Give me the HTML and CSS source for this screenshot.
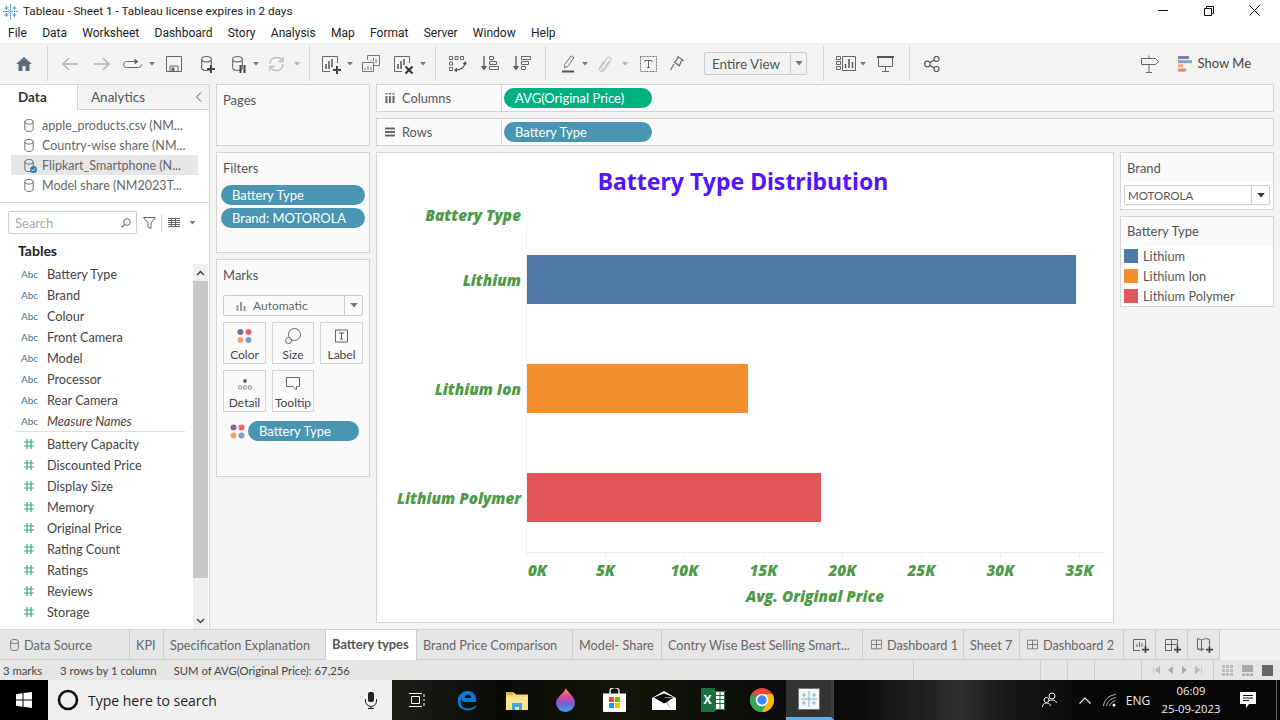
FILE: index.html
```html
<!DOCTYPE html>
<html lang="en">
<head>
<meta charset="utf-8">
<title>Tableau - Sheet 1</title>
<link rel="stylesheet" href="styles.css">
</head>
<body>
<svg class="defs" width="0" height="0" aria-hidden="true">
  <symbol id="caret" viewBox="0 0 6 4"><path d="M0 0h6L3 3.5z" fill="#777"/></symbol>
  <symbol id="cyl" viewBox="0 0 10 14"><path d="M.5 3v8c0 1.5 2 2.5 4.500 2.500s4.500-1 4.500-2.500V3M.5 3c0-1.500 2-2.500 4.500-2.500s4.500 1 4.500 2.500-2 2.500-4.500 2.500S.5 4.500.5 3z" fill="none" stroke="#666"/></symbol>
  <symbol id="hash" viewBox="0 0 10 10"><path d="M3 0v10M7 0v10M0 3h10M0 7h10" fill="none" stroke="#3fa483" stroke-width="1.200"/></symbol>
  <symbol id="dots" viewBox="0 0 15 15"><circle cx="3.500" cy="3.500" r="3" fill="#80679a"/><circle cx="11.500" cy="3.500" r="3" fill="#f0616e"/><circle cx="3.500" cy="11.500" r="3" fill="#f4a56c"/><circle cx="11.500" cy="11.500" r="3" fill="#7ba0cc"/></symbol>
  <symbol id="dash" viewBox="0 0 14 14"><path d="M.5 1.500h13v11H.5zM7 1.500v11M.5 7h13" fill="none" stroke="#666"/></symbol>
  <symbol id="plus" viewBox="0 0 8 8"><path d="M4 0v8M0 4h8" stroke="#444" stroke-width="2"/></symbol>
</svg>

<header class="titlebar">
  <svg class="logo" width="15" height="15" viewBox="0 0 15 15"><path d="M7.500 0v15M0 7.500h15M3.500 2v4M1.500 4h4M11.500 2v4M9.500 4h4M3.500 9v4M1.500 11h4M11.500 9v4M9.500 11h4" stroke="#2f7fb0" fill="none" stroke-dasharray="1.500 .7"/><path d="M5 5h5v5H5z" fill="#9cc4dc" opacity=".45"/></svg>
  <span class="window-title">Tableau - Sheet 1 - Tableau license expires in 2 days</span>
  <div class="winctl">
    <svg width="46" height="22" viewBox="0 0 46 22"><path d="M18 10.500h10" stroke="#111"/></svg>
    <svg width="46" height="22" viewBox="0 0 46 22"><path d="M18.500 8.500h7v7h-7zM20.500 8.500v-2h7v7h-2" stroke="#111" fill="none"/></svg>
    <svg width="46" height="22" viewBox="0 0 46 22"><path d="M17.500 5.500l10 10M27.500 5.500l-10 10" stroke="#111" fill="none"/></svg>
  </div>
</header>

<nav class="menubar">
  <span>File</span><span>Data</span><span>Worksheet</span><span>Dashboard</span><span>Story</span><span>Analysis</span><span>Map</span><span>Format</span><span>Server</span><span>Window</span><span>Help</span>
</nav>

<div class="toolbar">
  <span class="tb w32 first"><svg width="16" height="14" viewBox="0 0 16 14"><path d="M8 0L0 7h2.500v7h4V9h3v5h4V7H16z" fill="#5c6b7d"/></svg></span>
  <i class="sep"></i>
  <span class="tb w32"><svg width="16" height="14" viewBox="0 0 16 14"><path d="M16 7H1.500M7 1L1 7l6 6" fill="none" stroke="#b4b4b4" stroke-width="1.500"/></svg></span>
  <span class="tb w32"><svg width="16" height="14" viewBox="0 0 16 14"><path d="M0 7h14.500M9 1l6 6-6 6" fill="none" stroke="#b4b4b4" stroke-width="1.500"/></svg></span>
  <span class="tb w28"><svg width="19" height="12" viewBox="0 0 19 12"><path d="M12 3.500H3.500a3 3 0 0 0 0 6h12a3 3 0 0 0 3-3" fill="none" stroke="#666"/><path d="M11.500 .5l4 3-4 3z" fill="#666"/></svg></span>
  <span class="tb w12"><svg width="6" height="4"><use href="#caret"/></svg></span>
  <span class="tb w32"><svg width="16" height="16" viewBox="0 0 16 16"><path d="M.5.5h15v15H.5z" fill="none" stroke="#666"/><path d="M4 15v-5h8v5" fill="none" stroke="#666"/><path d="M5.500 11.500h3V15h-3z" fill="#666"/></svg></span>
  <span class="tb w32"><span class="stack"><svg width="11" height="15"><use href="#cyl"/></svg><svg class="badge" width="8" height="8"><use href="#plus"/></svg></span></span>
  <span class="tb w30"><span class="stack"><svg width="11" height="15"><use href="#cyl"/></svg><svg class="badge" width="7" height="8" viewBox="0 0 7 8"><path d="M1.500 0v8M5.500 0v8" stroke="#444" stroke-width="2"/></svg></span></span>
  <span class="tb w8"><svg width="6" height="4"><use href="#caret"/></svg></span>
  <span class="tb w32"><svg width="17" height="16" viewBox="0 0 17 16"><path d="M2 8a6.500 6.500 0 0 1 12-3.500M15 8a6.500 6.500 0 0 1-12 3.500" fill="none" stroke="#bbb" stroke-width="1.300"/><path d="M15 1v4.500h-4.500M2 15v-4.500h4.500" fill="none" stroke="#bbb" stroke-width="1.300"/></svg></span>
  <span class="tb w10"><svg width="6" height="4" class="pale"><use href="#caret"/></svg></span>
  <i class="sep"></i>
  <span class="tb w28"><span class="stack"><svg width="16" height="16" viewBox="0 0 16 16"><path d="M15.500 7V.5H.5v15H8" fill="none" stroke="#666"/><path d="M4 13V8M7 13V5M10 11V3" stroke="#555" stroke-width="1.500"/></svg><svg class="badge" width="8" height="8"><use href="#plus"/></svg></span></span>
  <span class="tb w12"><svg width="6" height="4"><use href="#caret"/></svg></span>
  <span class="tb w30"><svg width="18" height="17" viewBox="0 0 18 17"><path d="M5.500 5V.5h12v10H12" fill="none" stroke="#777"/><path d="M.5 7.500h11v9H.5z" fill="#f3f3f3" stroke="#777"/><path d="M9 6V5M11.500 6V3M14 8V4M3 15v-2M6 15v-4M9 15v-3" stroke="#777"/></svg></span>
  <span class="tb w32"><span class="stack"><svg width="16" height="16" viewBox="0 0 16 16"><path d="M15.500 7V.5H.5v15H8" fill="none" stroke="#666"/><path d="M4 13V8M7 13V5M10 9V3" stroke="#555" stroke-width="1.500"/></svg><svg class="badge" width="8" height="8" viewBox="0 0 8 8"><path d="M.5.5l7 7M7.500.5l-7 7" stroke="#333" stroke-width="2"/></svg></span></span>
  <span class="tb w10"><svg width="6" height="4"><use href="#caret"/></svg></span>
  <i class="sep"></i>
  <span class="tb w32"><svg width="18" height="16" viewBox="0 0 18 16"><path d="M.5.5h3v3h-3zM6 .5h3v3H6zM11.500.5h3v3h-3zM.5 6h3v3h-3zM.5 11.500h3v3h-3z" fill="none" stroke="#666"/><path d="M6 14c5 0 9-2 10.500-7" fill="none" stroke="#555" stroke-width="1.200"/><path d="M13.500 8l3-3 1.500 3.500zM8 11.500v5l-3-2.500z" fill="#555"/></svg></span>
  <span class="tb w32"><svg width="18" height="15" viewBox="0 0 18 15"><path d="M3 0v13" stroke="#555" stroke-width="1.300"/><path d="M0 10l3 4.500L6 10z" fill="#555"/><path d="M8.500 .5h4v3h-4zM8.500 5.500h7v3h-7zM8.500 10.500h9v3h-9z" fill="none" stroke="#666"/></svg></span>
  <span class="tb w32"><svg width="18" height="15" viewBox="0 0 18 15"><path d="M3 0v13" stroke="#555" stroke-width="1.300"/><path d="M0 10l3 4.500L6 10z" fill="#555"/><path d="M8.500 .5h9v3h-9zM8.500 5.500h7v3h-7zM8.500 10.500h4v3h-4z" fill="none" stroke="#666"/></svg></span>
  <i class="sep"></i>
  <span class="tb w24 ml4"><svg width="13" height="18" viewBox="0 0 13 18"><path d="M9 .8l3 2-6 8.500-3.500 1.500.3-3.500z" fill="none" stroke="#777"/><path d="M0 16.500h12" stroke="#555" stroke-width="2"/></svg></span>
  <span class="tb w10"><svg width="6" height="4"><use href="#caret"/></svg></span>
  <span class="tb w30"><svg width="13" height="16" viewBox="0 0 13 16"><path d="M10 5l-5 7.500c-1 1.500-3.500.5-2.800-1.500L8 2.500c1.500-2.500 5-.5 3.800 1.800L5.500 14c-2 2.800-6.500.5-4.800-2.500L5 5" fill="none" stroke="#c2c2c2" stroke-width="1.100"/></svg></span>
  <span class="tb w10"><svg width="6" height="4" class="pale"><use href="#caret"/></svg></span>
  <span class="tb w36"><svg width="17" height="16" viewBox="0 0 17 16"><path d="M.5.5h16v15H.5z" fill="none" stroke="#777" stroke-dasharray="2 1"/><path d="M5 4.500h7M8.500 4.500v7M7 11.500h3M5 6V4.500M12 6V4.500" fill="none" stroke="#666"/></svg></span>
  <span class="tb w22"><svg width="14" height="15" viewBox="0 0 14 15"><path d="M8 .8l5 3.500-2 1-1.500 4.500-5-3.500L7.500 3zM4 8l-3.500 6" fill="none" stroke="#666" stroke-width="1.100"/></svg></span>
  <div class="fit"><span class="fit-label">Entire View</span><span class="fit-arrow"><svg width="8" height="5"><use href="#caret"/></svg></span></div>
  <i class="sep"></i>
  <span class="tb w24 ml4"><svg width="20" height="15" viewBox="0 0 20 15"><path d="M.5.5h4v3h-4zM.5 5.500h4v3h-4zM.5 10.500h4v3h-4zM6.500 .5h13v14h-13z" fill="none" stroke="#666"/><path d="M9.500 12V8M13 12V3M16.500 12V6" stroke="#555" stroke-width="1.500"/></svg></span>
  <span class="tb w10"><svg width="6" height="4"><use href="#caret"/></svg></span>
  <span class="tb w34"><svg width="17" height="16" viewBox="0 0 17 16"><path d="M0 1h17" stroke="#555" stroke-width="2"/><path d="M1.500 2v8.500h14V2M8.500 10.500V15M5 15.500h7" fill="none" stroke="#666"/></svg></span>
  <i class="sep"></i>
  <span class="tb w32"><svg width="16" height="16" viewBox="0 0 16 16"><circle cx="3.500" cy="8" r="2.800" fill="none" stroke="#555" stroke-width="1.200"/><circle cx="12.500" cy="3" r="2.500" fill="none" stroke="#555" stroke-width="1.200"/><circle cx="12.500" cy="13" r="2.500" fill="none" stroke="#555" stroke-width="1.200"/><path d="M6 6.500l4.300-2.500M6 9.500l4.300 2.500" stroke="#555" stroke-width="1.200"/></svg></span>
  <div class="tb-right">
    <span class="tb w32"><svg width="18" height="18" viewBox="0 0 18 18"><path d="M.5 3.500h14l3 3-3 3H.5zM8 .5v3M8 9.500V17M5 17.500h6" fill="none" stroke="#666"/></svg></span>
    <div class="showme">
      <svg width="14" height="16" viewBox="0 0 14 16"><rect width="11" height="3" fill="#8d7ba3"/><rect y="4.200" width="14" height="3" fill="#7fa5cd"/><rect y="8.400" width="5" height="3" fill="#f4a971"/><rect y="12.600" width="8" height="3" fill="#f87a85"/></svg>
      <span>Show Me</span>
    </div>
  </div>
</div>

<main class="main">
  <aside class="datapane">
    <div class="panetabs">
      <span class="ptab ptab-on">Data</span>
      <span class="ptab ptab-off">Analytics<svg width="7" height="10" viewBox="0 0 7 10"><path d="M6 .5L1.500 5 6 9.500" fill="none" stroke="#555"/></svg></span>
    </div>
    <ul class="sources">
      <li><svg width="10" height="13"><use href="#cyl"/></svg>apple_products.csv (NM...</li>
      <li><svg width="10" height="13"><use href="#cyl"/></svg>Country-wise share (NM...</li>
      <li class="active"><span class="stack"><svg width="10" height="13"><use href="#cyl"/></svg><svg class="check" width="7" height="7" viewBox="0 0 7 7"><circle cx="3.500" cy="3.500" r="3.500" fill="#2b7fa8"/><path d="M1.800 3.500l1.300 1.300 2.100-2.300" stroke="#fff" fill="none"/></svg></span>Flipkart_Smartphone (N...</li>
      <li><svg width="10" height="13"><use href="#cyl"/></svg>Model share (NM2023T...</li>
    </ul>
    <div class="searchrow">
      <div class="search"><span>Search</span><svg width="10" height="10" viewBox="0 0 10 10"><circle cx="6" cy="4" r="3.300" fill="none" stroke="#666"/><path d="M3.500 6.500L.5 9.500" stroke="#666" stroke-width="1.200"/></svg></div>
      <svg width="13" height="12" viewBox="0 0 13 12"><path d="M.5.500h12L8 6v5.500L5 10V6z" fill="none" stroke="#666"/></svg>
      <i class="vsep"></i>
      <svg width="12" height="9" viewBox="0 0 12 9"><path d="M0 .5h12M0 2.500h12M0 4.500h12M0 6.500h12M0 8.500h12M3.500 0v9M7.500 0v9" stroke="#666" fill="none"/></svg>
      <svg class="listcaret" width="7" height="4"><use href="#caret"/></svg>
    </div>
    <h2 class="tables">Tables</h2>
    <div class="fieldsarea">
      <ul class="fields">
        <li><abbr>Abc</abbr>Battery Type</li>
        <li><abbr>Abc</abbr>Brand</li>
        <li><abbr>Abc</abbr>Colour</li>
        <li><abbr>Abc</abbr>Front Camera</li>
        <li><abbr>Abc</abbr>Model</li>
        <li><abbr>Abc</abbr>Processor</li>
        <li><abbr>Abc</abbr>Rear Camera</li>
        <li class="gen"><abbr>Abc</abbr>Measure Names</li>
        <li class="rule"></li>
        <li><b class="hs"><svg width="10" height="10"><use href="#hash"/></svg></b>Battery Capacity</li>
        <li><b class="hs"><svg width="10" height="10"><use href="#hash"/></svg></b>Discounted Price</li>
        <li><b class="hs"><svg width="10" height="10"><use href="#hash"/></svg></b>Display Size</li>
        <li><b class="hs"><svg width="10" height="10"><use href="#hash"/></svg></b>Memory</li>
        <li><b class="hs"><svg width="10" height="10"><use href="#hash"/></svg></b>Original Price</li>
        <li><b class="hs"><svg width="10" height="10"><use href="#hash"/></svg></b>Rating Count</li>
        <li><b class="hs"><svg width="10" height="10"><use href="#hash"/></svg></b>Ratings</li>
        <li><b class="hs"><svg width="10" height="10"><use href="#hash"/></svg></b>Reviews</li>
        <li><b class="hs"><svg width="10" height="10"><use href="#hash"/></svg></b>Storage</li>
      </ul>
      <div class="scrollbar">
        <span class="sb-btn"><svg width="9" height="6" viewBox="0 0 9 6"><path d="M1 5l3.500-3.500L8 5" fill="none" stroke="#444" stroke-width="1.500"/></svg></span>
        <span class="sb-thumb"></span>
        <span class="sb-btn sb-end"><svg width="9" height="6" viewBox="0 0 9 6"><path d="M1 1l3.500 3.500L8 1" fill="none" stroke="#444" stroke-width="1.500"/></svg></span>
      </div>
    </div>
  </aside>

  <section class="cards">
    <div class="card pages"><h3>Pages</h3></div>
    <div class="card filters">
      <h3>Filters</h3>
      <div class="pill blue">Battery Type</div>
      <div class="pill blue brandpill">Brand: MOTOROLA</div>
    </div>
    <div class="card marks">
      <h3>Marks</h3>
      <div class="marktype">
        <svg width="10" height="10" viewBox="0 0 10 10"><path d="M1.500 10V4M5 10V1M8.500 10V5" stroke="#999" stroke-width="2"/></svg>
        <span>Automatic</span>
        <i><svg width="8" height="5"><use href="#caret"/></svg></i>
      </div>
      <div class="markbtns">
        <div class="mbtn"><svg width="15" height="15"><use href="#dots"/></svg><span>Color</span></div>
        <div class="mbtn"><svg width="16" height="16" viewBox="0 0 16 16"><circle cx="9.500" cy="6.500" r="6" fill="none" stroke="#666"/><circle cx="3.500" cy="12.500" r="3" fill="#fafafa" stroke="#666"/></svg><span>Size</span></div>
        <div class="mbtn"><svg width="13" height="13" viewBox="0 0 13 13"><path d="M.5.500h12v12H.5z" fill="none" stroke="#666"/><path d="M4 3.500h5M6.500 3.500v6M5 9.500h3" fill="none" stroke="#555"/></svg><span>Label</span></div>
        <div class="mbtn"><svg width="14" height="12" viewBox="0 0 14 12"><circle cx="7" cy="3" r="2" fill="#666"/><circle cx="2" cy="9.500" r="1.700" fill="none" stroke="#666" stroke-width=".8"/><circle cx="7" cy="9.500" r="1.700" fill="none" stroke="#666" stroke-width=".8"/><circle cx="12" cy="9.500" r="1.700" fill="none" stroke="#666" stroke-width=".8"/></svg><span>Detail</span></div>
        <div class="mbtn"><svg width="14" height="14" viewBox="0 0 14 14"><path d="M.5.500h13v9h-3v3.500L7 9.500H.5z" fill="none" stroke="#666"/></svg><span>Tooltip</span></div>
      </div>
      <div class="markfield">
        <svg width="15" height="15"><use href="#dots"/></svg>
        <div class="pill blue">Battery Type</div>
      </div>
    </div>
  </section>

  <section class="workspace">
    <div class="shelf">
      <div class="shelf-label"><svg width="10" height="10" viewBox="0 0 10 10"><path d="M1.500 3v7M5 3v7M8.500 3v7M1.500 0v1.500M5 0v1.500M8.500 0v1.500" stroke="#666" stroke-width="2"/></svg>Columns</div>
      <div class="shelf-body"><div class="pill green">AVG(Original Price)</div></div>
    </div>
    <div class="shelf">
      <div class="shelf-label"><svg width="10" height="10" viewBox="0 0 10 10"><path d="M0 1.500h10M0 5h10M0 8.500h10" stroke="#666" stroke-width="2"/></svg>Rows</div>
      <div class="shelf-body"><div class="pill blue">Battery Type</div></div>
    </div>
    <div class="viewarea">
      <div class="chart">
        <h1 class="chart-title">Battery Type Distribution</h1>
        <div class="col-head">Battery Type</div>
        <div class="plot">
          <div class="row"><span class="row-label">Lithium</span><div class="track"><div class="bar c1" style="width:549px"></div></div></div>
          <div class="row"><span class="row-label">Lithium Ion</span><div class="track"><div class="bar c2" style="width:221px"></div></div></div>
          <div class="row"><span class="row-label">Lithium Polymer</span><div class="track"><div class="bar c3" style="width:294px"></div></div></div>
        </div>
        <div class="ticks"><i></i><i></i><i></i><i></i><i></i><i></i><i></i></div>
        <div class="tick-labels"><span class="zero">0K</span><span>5K</span><span>10K</span><span>15K</span><span>20K</span><span>25K</span><span>30K</span><span>35K</span></div>
        <div class="axis-title">Avg. Original Price</div>
      </div>
      <aside class="legends">
        <div class="legend brand">
          <h3>Brand</h3>
          <div class="legend-body"><div class="select"><span>MOTOROLA</span><i><svg width="8" height="5" viewBox="0 0 6 4"><path d="M0 0h6L3 3.500z" fill="#333"/></svg></i></div></div>
        </div>
        <div class="legend">
          <h3>Battery Type</h3>
          <ul class="legend-body keys">
            <li><i class="c1"></i>Lithium</li>
            <li><i class="c2"></i>Lithium Ion</li>
            <li><i class="c3"></i>Lithium Polymer</li>
          </ul>
        </div>
      </aside>
    </div>
  </section>
</main>

<div class="tabs">
  <span class="tab t-ds"><svg width="9" height="12"><use href="#cyl"/></svg>Data Source</span>
  <span class="tab t-kpi">KPI</span>
  <span class="tab t-spec">Specification Explanation</span>
  <span class="tab t-bat">Battery types</span>
  <span class="tab t-brand">Brand Price Comparison</span>
  <span class="tab t-model">Model- Share</span>
  <span class="tab t-contry">Contry Wise Best Selling Smart...</span>
  <span class="tab t-d1"><svg width="11" height="11"><use href="#dash"/></svg>Dashboard 1</span>
  <span class="tab t-s7">Sheet 7</span>
  <span class="tab t-d2"><svg width="11" height="11"><use href="#dash"/></svg>Dashboard 2</span>
  <span class="tab t-add"><span class="stack"><svg width="13" height="12" viewBox="0 0 13 12"><path d="M.5.500h12v7M7 11.500H.5V.5" fill="none" stroke="#666"/><path d="M4 8V5M6.500 8V3M9 8V4" stroke="#666"/></svg><svg class="badge" width="7" height="7"><use href="#plus"/></svg></span></span>
  <span class="tab t-add"><span class="stack"><svg width="13" height="12" viewBox="0 0 13 12"><path d="M7 11.500H.5V.5h12V7M.5 5.500h12M6.500 .5v11" fill="none" stroke="#666"/></svg><svg class="badge" width="7" height="7"><use href="#plus"/></svg></span></span>
  <span class="tab t-add"><span class="stack"><svg width="13" height="13" viewBox="0 0 13 13"><path d="M.5.500l4 1.500 4-1.500 4 1v6M7 11l-2.500 1.500-4-1.500zM4.500 2v10.500M.5 .5v10.500" fill="none" stroke="#666"/></svg><svg class="badge" width="7" height="7"><use href="#plus"/></svg></span></span>
  <span class="tab-rest"></span>
</div>

<footer class="status">
  <div class="st-text"><span>3 marks</span><span>3 rows by 1 column</span><span>SUM of AVG(Original Price): 67,256</span></div>
  <i class="st-cell s127"></i><i class="st-cell s27"></i><i class="st-cell s27"></i><i class="st-cell s47"></i>
  <div class="st-cell s72 nav">
    <svg width="7" height="8" viewBox="0 0 7 8"><path d="M.5 0v8M7 0L2 4l5 4z" fill="#bbb" stroke="#bbb" stroke-width=".6"/></svg>
    <svg width="7" height="8" viewBox="0 0 7 8"><path d="M6 0L1 4l5 4z" fill="#aaa"/></svg>
    <svg width="7" height="8" viewBox="0 0 7 8"><path d="M1 0l5 4-5 4z" fill="#aaa"/></svg>
    <svg width="7" height="8" viewBox="0 0 7 8"><path d="M6.500 0v8M0 0l5 4-5 4z" fill="#bbb" stroke="#bbb" stroke-width=".6"/></svg>
  </div>
  <div class="st-cell views">
    <svg width="11" height="11" viewBox="0 0 11 11"><path d="M0 0h3v3H0zM4 0h3v3H4zM8 0h3v3H8zM0 4h3v3H0zM4 4h3v3H4zM8 4h3v3H8zM0 8h3v3H0zM4 8h3v3H4zM8 8h3v3H8z" fill="#bbb"/></svg>
    <svg width="11" height="11" viewBox="0 0 11 11"><path d="M0 0h11v7H0zM0 8.500h3V11H0zM4 8.500h3V11H4zM8 8.500h3V11H8z" fill="#aaa"/></svg>
    <svg width="11" height="11" viewBox="0 0 11 11"><path d="M0 0h11v11H0z" fill="#666"/></svg>
  </div>
</footer>

<footer class="taskbar">
  <div class="start"><svg width="16" height="16" viewBox="0 0 16 16"><path d="M0 2.300l6.500-1v6.200H0zM7.500 1.100L16 0v7.500H7.500zM0 8.500h6.500v6.200l-6.500-1zM7.500 8.500H16V16l-8.500-1.200z" fill="#fff"/></svg></div>
  <div class="tsearch">
    <svg width="22" height="22" viewBox="0 0 22 22"><circle cx="11" cy="11" r="9" fill="none" stroke="#111" stroke-width="2.600"/></svg>
    <span>Type here to search</span>
    <svg class="mic" width="12" height="17" viewBox="0 0 12 17"><rect x="3" y="0" width="6" height="10" rx="2" fill="#222"/><path d="M.5 7v2a5.500 5.500 0 0 0 11 0V7M6 14.500V17M3 16.500h6" fill="none" stroke="#222"/></svg>
  </div>
  <span class="tk tk-view"><svg width="17" height="14" viewBox="0 0 17 14"><path d="M3.500 3.500h8v7h-8zM1 .5h13M1 13.500h13M16 1v3M16 6v2M16 10v3" fill="none" stroke="#fff"/></svg></span>
  <span class="tk"><svg width="21" height="21" viewBox="0 0 21 21"><path d="M19 15c-2.500 3.500-10 5-13.500 1.500C3 14 3 10.500 5 8c-1 3 1 4 4 4h10V9.500C19 4 15 1 10.500 1 5 1 1 5.500.8 10.500 0 16.500 5 20.500 10.500 20.500c3.500 0 6.500-1.500 8.500-3.500zM7.500 8c.5-2 2-3.500 3.500-3.500s3 1.500 3.200 3.500z" fill="#0b78d4"/></svg></span>
  <span class="tk"><svg width="22" height="19" viewBox="0 0 22 19"><path d="M0 1.500h8l2 2h12V19H0z" fill="#f7d774"/><path d="M0 1h7v3H0z" fill="#e0b23c"/><path d="M0 6h22v13H0z" fill="#fce394"/><path d="M6 19v-7h10v7h-3v-3H9v3z" fill="#3fa8dc"/></svg></span>
  <span class="tk"><svg width="19" height="24" viewBox="0 0 19 24"><defs><linearGradient id="drop" x1="0" y1="0" x2="0" y2="1"><stop offset="0" stop-color="#f4a23c"/><stop offset=".35" stop-color="#e2489a"/><stop offset=".65" stop-color="#7a5bd6"/><stop offset="1" stop-color="#2fb0e8"/></linearGradient></defs><path d="M10 0c1 4 9 8 9 15a9.500 9 0 0 1-19 0C0 9 8 6 10 0z" fill="url(#drop)"/></svg></span>
  <span class="tk"><svg width="23" height="24" viewBox="0 0 23 24"><path d="M7 6V3a4 3 0 0 1 9 0v3" fill="none" stroke="#fff" stroke-width="1.300"/><path d="M0 5.500h23V23a1 1 0 0 1-1 1H1a1 1 0 0 1-1-1z" fill="#fff"/><path d="M6 9h5v5H6z" fill="#f25022"/><path d="M12 9h5v5h-5z" fill="#7fba00"/><path d="M6 15h5v5H6z" fill="#00a4ef"/><path d="M12 15h5v5h-5z" fill="#ffb900"/></svg></span>
  <span class="tk"><svg width="24" height="19" viewBox="0 0 24 19"><path d="M12 0l12 7v12H0V7z" fill="#fff"/><path d="M2 6.500l10 6 5.500-3L12 6h9L12 2.500 3 6z" fill="#000"/><path d="M12 6.500h10L14 11l5 7z" fill="#111"/></svg></span>
  <span class="tk"><span class="excel"><span class="excel-x">X</span><svg width="10" height="19" viewBox="0 0 10 19"><path d="M.5.500h9v18h-9zM.5 4.500h9M.5 8.500h9M.5 12.500h9M5 .5v18" fill="none" stroke="#1d6f42"/></svg></span></span>
  <span class="tk"><svg width="24" height="24" viewBox="0 0 24 24"><circle cx="12" cy="12" r="12" fill="#ea4335"/><path d="M12 12L1.600 6A12 12 0 0 0 12 24l5.200-9z" fill="#34a853"/><path d="M12 6h10.400A12 12 0 0 1 12 24l5.200-9z" fill="#fbbc05"/><circle cx="12" cy="12" r="5.500" fill="#4285f4" stroke="#fff" stroke-width="1.600"/></svg></span>
  <span class="tk tk-on"><svg width="22" height="22" viewBox="0 0 22 22"><rect width="22" height="22" fill="#f4f6f8" stroke="#777" stroke-width="2"/><path d="M11 3v16M3 11h16M6 5v4M4 7h4M16 5v4M14 7h4M6 13v4M4 15h4M16 13v4M14 15h4" stroke="#7fb2d2" fill="none"/></svg></span>
  <div class="tray">
    <span class="tr w36t"><svg width="15" height="16" viewBox="0 0 15 16"><circle cx="10" cy="4" r="3" fill="none" stroke="#eee"/><circle cx="4.500" cy="8" r="2.500" fill="none" stroke="#eee"/><path d="M.5 15c0-2.500 1.500-4 4-4s4 1.500 4 3M7 9c1-1 2-1 3-1 2.500 0 4 1 4.500 3" fill="none" stroke="#eee"/></svg></span>
    <span class="tr w36t"><svg width="12" height="7" viewBox="0 0 12 7"><path d="M.5 6.500L6 1l5.500 5.500" fill="none" stroke="#eee" stroke-width="1.200"/></svg></span>
    <span class="tr w14t"><svg width="14" height="13" viewBox="0 0 14 13"><path d="M.5 12C1 6 6 1 13 .5M3.500 12C4 8 8 4 13 3.500M6.500 12c.5-2 2.500-4.500 6-5.500" fill="none" stroke="#bbb"/><circle cx="11" cy="11" r="1.500" fill="#fff"/></svg></span>
    <span class="tr eng">ENG</span>
    <span class="tr clock"><span>06:09</span><span>25-09-2023</span></span>
    <span class="tr w50t"><svg width="16" height="16" viewBox="0 0 16 16"><path d="M0 0h16v12H9l-3 4v-4H0z" fill="#fff"/><path d="M3 3.500h10M3 6h10M3 8.500h6" stroke="#111"/></svg></span>
    <i class="desk"></i>
  </div>
</footer>
</body>
</html>
```
FILE: styles.css
```css
* { box-sizing: border-box; }
html, body { margin: 0; padding: 0; height: 100%; }
body {
  width: 1280px;
  height: 720px;
  overflow: hidden;
  display: flex;
  flex-direction: column;
  font-family: "Lato", "Liberation Sans", sans-serif;
  font-size: 13px;
  color: #555;
  background: #f3f3f3;
}
h1, h2, h3, ul { margin: 0; padding: 0; font-weight: normal; list-style: none; }
abbr { text-decoration: none; }
i, b { font-style: normal; font-weight: normal; }
svg { display: block; flex: none; }
.defs { position: absolute; }
.stack { position: relative; display: block; }
.badge { position: absolute; right: -3px; bottom: -2px; }

.titlebar {
  height: 22px; flex: none; background: #fff;
  display: flex; align-items: center; padding-left: 3px;
}
.window-title { margin-left: 5px; font: 11.750px "Roboto", sans-serif; color: #222; }
.winctl { margin-left: auto; display: flex; margin-right: 2px; }

.menubar {
  height: 21px; flex: none; background: #fff;
  display: flex; align-items: center; gap: 15.300px; padding-left: 8px;
  font: 12px "Roboto", sans-serif; color: #222;
}

.toolbar { height: 41px; flex: none; display: flex; align-items: center; background: #f3f3f3; }
.tb { display: flex; align-items: center; justify-content: center; height: 100%; flex: none; }
.first { margin-left: 8px; }
.ml4 { margin-left: 4px; }
.w8 { width: 8px; } .w10 { width: 10px; } .w12 { width: 12px; } .w22 { width: 22px; }
.w24 { width: 24px; } .w28 { width: 28px; } .w30 { width: 30px; } .w32 { width: 32px; }
.w34 { width: 34px; } .w36 { width: 36px; }
.pale { opacity: .5; }
.sep { width: 1px; height: 35px; background: #d4d4d4; margin: 0 6px 0 7px; flex: none; }
.fit {
  width: 103px; height: 23px; margin: 0 9px 0 16px; display: flex; flex: none;
  border: 1px solid #ccc; border-radius: 2px; color: #555; font-size: 13.500px; align-items: center;
}
.fit-label { width: 85px; padding-left: 7px; }
.fit-arrow { flex: 1; height: 100%; border-left: 1px solid #ccc; display: flex; align-items: center; justify-content: center; }
.tb-right { margin-left: auto; display: flex; align-items: center; height: 100%; padding-right: 29px; }
.showme { margin-left: 12px; display: flex; align-items: center; gap: 6px; font-size: 13px; color: #444; }
.showme span { padding-bottom: 1px; }

.main { height: 545px; flex: none; display: flex; background: #f3f3f3; }

.datapane { width: 210px; flex: none; background: #fff; border-right: 1px solid #d4d4d4; display: flex; flex-direction: column; }
.panetabs { display: flex; height: 26px; flex: none; font-size: 13.500px; background: #f3f3f3; }
.ptab { display: flex; align-items: center; padding-bottom: 1px; }
.ptab-on { width: 77px; padding-left: 18px; font-weight: 700; color: #333; background: #fff; border-top: 1px solid #d4d4d4; }
.ptab-off { flex: 1; padding-left: 13px; color: #555; border: 1px solid #d4d4d4; border-right: 0; justify-content: space-between; padding-right: 7px; }
.sources { height: 93px; flex: none; padding: 5px 11px 0; border-bottom: 1px solid #d9d9d9; }
.sources li { height: 20px; padding-left: 13px; display: flex; align-items: center; gap: 8px; font-size: 12.500px; color: #666; white-space: nowrap; }
.sources .active { background: #e6e6e6; }
.check { position: absolute; right: -3px; bottom: -1px; }
.searchrow { height: 23px; margin-top: 8px; flex: none; display: flex; align-items: center; padding-left: 8px; }
.search {
  width: 129px; height: 23px; border: 1px solid #ccc; border-radius: 2px; display: flex;
  align-items: center; justify-content: space-between; padding: 0 5px 0 6px; color: #aaa; font-size: 13px;
}
.search span { padding-top: 1px; }
.searchrow > svg:nth-of-type(1) { margin-left: 6px; }
.vsep { width: 1px; height: 18px; background: #d4d4d4; margin: 0 6px 0 5px; flex: none; }
.listcaret { margin-left: 9px; }
.tables { height: 29px; flex: none; padding: 8px 0 0 18px; font-size: 14px; font-weight: 700; color: #222; }
.fieldsarea { flex: 1; min-height: 0; display: flex; }
.fields { width: 183px; flex: none; }
.fields li { height: 21px; display: flex; align-items: center; font-size: 12.700px; color: #444; white-space: nowrap; }
.fields abbr { width: 47px; padding-left: 21px; font-size: 10px; color: #3f7596; flex: none; }
.fields .hs { width: 47px; padding-left: 24px; flex: none; }
.fields .gen { font-style: italic; }
.fields .gen abbr { font-style: normal; }
.fields .rule { height: 1px; margin: 0 -2px 1px 15px; background: #ddd; }
.scrollbar { width: 15px; margin-left: 10px; margin-top: 1px; background: #f0f0f0; display: flex; flex-direction: column; align-items: center; flex: none; }
.sb-btn { height: 17px; display: flex; align-items: center; justify-content: center; flex: none; }
.sb-thumb { width: 100%; height: 297px; background: #c8c8c8; flex: none; }
.sb-end { margin-top: auto; }

.cards { width: 154px; flex: none; margin-left: 6px; display: flex; flex-direction: column; gap: 6px; }
.card { background: #fafafa; border: 1px solid #d4d4d4; padding: 0 5px; flex: none; }
.card h3 { font-size: 13px; color: #555; padding: 8px 0 0 1px; height: 25px; line-height: 15px; }
.pages { height: 62px; }
.filters { height: 101px; padding: 0 4px; }
.filters h3 { padding-left: 2px; height: 32px; }
.filters .pill { width: 100%; }
.filters .pill + .pill { margin-top: 3px; }
.brandpill { font-size: 12.600px; }
.marks { height: 218px; padding: 0 6px; }
.marks h3 { padding-left: 0; height: 35px; }
.pill {
  height: 20px; border-radius: 10px; color: #fff; font-size: 13px; line-height: 20px;
  padding-left: 11px; white-space: nowrap; flex: none;
}
.blue { background: #4996b2; }
.green { background: #00b180; }
.marktype {
  height: 21px; display: flex; align-items: center; border: 1px solid #ccc; border-radius: 2px;
  padding-left: 12px; gap: 7px; font-size: 12px; color: #666;
}
.marktype i { margin-left: auto; width: 18px; height: 100%; border-left: 1px solid #ccc; display: flex; align-items: center; justify-content: center; }
.markbtns { display: grid; grid-template-columns: 43px 42px 43px; column-gap: 6px; row-gap: 6px; margin-top: 6px; }
.mbtn {
  height: 42px; border: 1px solid #d4d4d4; display: flex; flex-direction: column; align-items: center;
  padding-top: 5px; font-size: 12px; color: #444; background: #fafafa;
}
.mbtn svg { height: 16px; }
.mbtn span { margin-top: auto; padding-bottom: 1px; }
.markfield { display: flex; align-items: center; gap: 3px; margin: 9px 0 0 7px; }
.markfield .pill { width: 111px; }

.workspace { width: 898px; flex: none; margin-left: 6px; display: flex; flex-direction: column; }
.shelf { height: 28px; flex: none; display: flex; background: #fafafa; border: 1px solid #d4d4d4; margin-bottom: 6px; }
.shelf-label { width: 125px; border-right: 1px solid #d4d4d4; display: flex; align-items: center; gap: 7px; padding: 0 0 1px 8px; color: #555; font-size: 12.800px; }
.shelf-body { flex: 1; display: flex; align-items: center; padding-left: 2px; }
.shelf .pill { width: 148px; }

.viewarea { display: flex; gap: 6px; align-items: flex-start; }
.chart { width: 738px; height: 471px; flex: none; background: #fff; border: 1px solid #d4d4d4; display: flex; flex-direction: column; font-family: "Open Sans", sans-serif; }
.chart-title { height: 52px; text-align: center; font-size: 23px; line-height: 56px; font-weight: 700; color: #5514ff; font-family: "Noto Sans", sans-serif; padding-right: 4px; flex: none; }
.col-head, .row-label, .tick-labels, .axis-title { color: #4f9b49; font-weight: 800; font-style: italic; font-size: 15.300px; }
.col-head { height: 21px; line-height: 21px; margin-bottom: -1px; width: 144px; text-align: right; flex: none; }
.plot { height: 327px; flex: none; display: flex; flex-direction: column; }
.row { height: 109px; display: flex; align-items: center; flex: none; }
.row-label { width: 144px; text-align: right; white-space: nowrap; flex: none; }
.track { width: 584px; height: 100%; margin-left: 5px; border-left: 1px solid #f0f0f0; display: flex; align-items: center; }
.bar { height: 49px; }
.c1 { background: #4e79a7; }
.c2 { background: #f28e2b; }
.c3 { background: #e15759; }
.ticks { margin-left: 149px; width: 579px; height: 5px; flex: none; display: flex; border-top: 1px solid #eee; border-left: 1px solid #eee; padding-left: 78px; }
.ticks i { width: 79px; height: 4px; border-left: 1px solid #eee; flex: none; }
.tick-labels { display: flex; margin-left: 110px; height: 27px; line-height: 27px; flex: none; }
.tick-labels span { width: 79px; text-align: center; flex: none; }
.tick-labels .zero { padding-left: 22px; }
.axis-title { margin-left: 149px; width: 578px; text-align: center; height: 24px; line-height: 24px; flex: none; }

.legends { width: 154px; flex: none; display: flex; flex-direction: column; gap: 6px; }
.legend { border: 1px solid #d4d4d4; background: #fafafa; flex: none; }
.legend h3 { height: 29px; line-height: 29px; padding-left: 6px; font-size: 13px; color: #555; }
.brand h3 { line-height: 31px; }
.legend-body { background: #fff; }
.brand { height: 58px; }
.brand .legend-body { height: 27px; padding: 3px 3px 0; }
.select { height: 20px; border: 1px solid #ccc; border-radius: 2px; display: flex; align-items: center; padding-left: 3px; font-size: 11.500px; color: #555; }
.select i { margin-left: auto; width: 18px; height: 100%; border-left: 1px solid #ccc; display: flex; align-items: center; justify-content: center; }
.keys { height: 60px; padding: 0 0 0 3px; }
.keys li { height: 20px; display: flex; align-items: center; gap: 5px; font-size: 12.800px; color: #555; }
.keys i { width: 14px; height: 14px; flex: none; }

.tabs { height: 31px; flex: none; display: flex; border-top: 1px solid #d4d4d4; background: #f0f0f0; }
.tab {
  display: flex; align-items: center; gap: 5px; padding-left: 6px; height: 100%; flex: none;
  background: #e6e6e6; border-right: 1px solid #ccc; border-bottom: 1px solid #ccc;
  font-size: 12.700px; color: #666; white-space: nowrap; overflow: hidden;
}
.t-ds { width: 130px; padding-left: 10px; }
.t-kpi { width: 34px; padding-left: 6px; }
.t-spec { width: 162px; }
.t-bat { width: 91px; background: #fff; font-weight: 700; font-size: 12.900px; color: #555; border-bottom: 0; padding-bottom: 3px; }
.t-brand { width: 156px; }
.t-model { width: 89px; }
.t-contry { width: 201px; }
.t-d1 { width: 101px; padding-left: 8px; }
.t-s7 { width: 56px; }
.t-d2 { width: 104px; padding-left: 7px; }
.t-add { width: 32px; padding-left: 9px; }
.tab-rest { flex: 1; }

.status { height: 20px; flex: none; display: flex; background: #e6e6e6; font-size: 11.300px; color: #444; }
.st-text { width: 913px; display: flex; padding-left: 3px; align-items: center; flex: none; }
.st-text span:nth-child(2) { margin-left: 18px; }
.st-text span:nth-child(3) { margin-left: 17px; }
.st-cell { border-left: 1px solid #ccc; flex: none; height: 100%; display: flex; align-items: center; }
.s127 { width: 127px; } .s27 { width: 27px; } .s47 { width: 47px; } .s72 { width: 72px; }
.nav { justify-content: space-evenly; padding: 0 4px; }
.views { flex: 1; justify-content: space-between; padding: 0 7px 0 8px; }

.taskbar {
  height: 40px; flex: none; display: flex; align-items: center; color: #eee;
  background: linear-gradient(90deg, #1e1e18 392px, #0b0b06 500px, #14140a 620px, #0a0a0a 800px, #0c0c0c 860px, #2e2e2e 960px, #171717 1010px, #060606 1100px);
}
.start { width: 48px; height: 100%; background: #000; display: flex; align-items: center; justify-content: center; flex: none; }
.tsearch {
  width: 344px; height: 100%; background: #f0f0f0; display: flex; align-items: center; flex: none;
  padding: 0 12px 0 9px; gap: 9px; color: #222; font: 14px "Open Sans", sans-serif;
}
.mic { margin-left: auto; margin-right: 3px; }
.tk { width: 49px; height: 100%; display: flex; align-items: center; justify-content: center; flex: none; }
.tk-view { width: 51px; padding-right: 2px; }
.tk-on { width: 48px; background: #333; border-bottom: 3px solid #62aee6; border-right: 3px solid #3f3f3f; }
.excel { display: flex; align-items: center; width: 24px; height: 24px; }
.excel-x { width: 14px; height: 24px; background: #1d6f42; color: #fff; font: 700 12px/24px "Open Sans", sans-serif; text-align: center; flex: none; }
.excel svg { background: #fff; }
.tray { margin-left: auto; display: flex; align-items: center; height: 100%; }
.tr { height: 100%; display: flex; align-items: center; justify-content: center; flex: none; }
.w36t { width: 36px; } .w14t { width: 14px; } .w50t { width: 50px; }
.eng { width: 42px; font: 12px "Open Sans", sans-serif; }
.clock { width: 64px; flex-direction: column; font: 11.300px/18px "Open Sans", sans-serif; white-space: nowrap; }
.desk { width: 7px; height: 100%; background: linear-gradient(90deg, transparent 3px, #666 3px, #666 4px, transparent 4px); }
```
